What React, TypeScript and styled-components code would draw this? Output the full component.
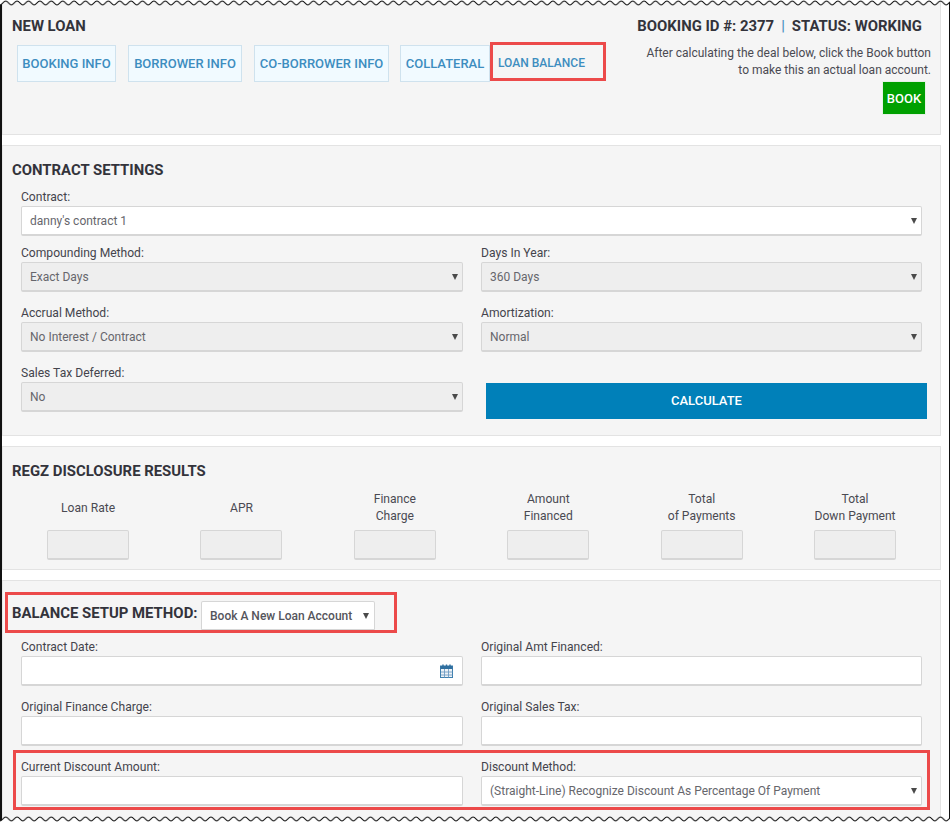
import React from "react";
import styled, { createGlobalStyle } from "styled-components";

const Global = createGlobalStyle`
  html, body { margin: 0; padding: 0; background: #fff; }
  * { box-sizing: border-box; }
  body { font-family: Roboto, "Liberation Sans", sans-serif; color: #3c3c46; }
`;

const Page = styled.div`
  position: relative;
  width: 950px;
  height: 823px;
  overflow: hidden;
  background: #fff;
`;

const Sheet = styled.main`
  width: 950px;
  height: 823px;
  padding-right: 8px;
  border-left: 2px solid #111;
  border-right: 1px solid #111;
  display: flex;
  flex-direction: column;
  gap: 10px;
`;

const Panel = styled.section<{ $height: number }>`
  height: ${(p) => p.$height}px;
  flex: none;
  background: #f5f5f5;
  border: 1px solid #e3e3e3;
  border-left-color: #e8e8e8;
  padding: 0 0 0 9px;
`;

const Title = styled.h2`
  margin: 0;
  font-size: 14.9px;
  line-height: 20px;
  font-weight: 700;
  color: #33333b;
  white-space: nowrap;
`;

const HeaderPanel = styled(Panel)`
  display: flex;
  justify-content: space-between;
  padding-top: 15px;
  padding-right: 9px;
`;

const HeaderLeft = styled.div`
  display: flex;
  flex-direction: column;
`;

const Tabs = styled.nav`
  display: flex;
  margin: 9px 0 0 5px;
`;

const Tab = styled.a<{ $width: number; $gap: number }>`
  width: ${(p) => p.$width}px;
  margin-right: ${(p) => p.$gap}px;
  height: 37px;
  display: flex;
  align-items: center;
  justify-content: center;
  background: #f1faff;
  border: 1px solid #cfe2ee;
  color: #3d8dbf;
  font-size: 13px;
  font-weight: 500;
  white-space: nowrap;
`;

const PlainTab = styled.a`
  position: relative;
  width: 116px;
  height: 37px;
  padding: 0 0 2px 8px;
  display: flex;
  align-items: center;
  color: #3d8dbf;
  font-size: 12px;
  font-weight: 500;
  white-space: nowrap;
`;

const Highlight = styled.span<{ $t: number; $r: number; $b: number; $l: number }>`
  position: absolute;
  top: ${(p) => p.$t}px;
  right: ${(p) => p.$r}px;
  bottom: ${(p) => p.$b}px;
  left: ${(p) => p.$l}px;
  border: 3px solid #ec4a4a;
  pointer-events: none;
`;

const HeaderRight = styled.div`
  display: flex;
  flex-direction: column;
  align-items: flex-end;
`;

const Status = styled(Title)`
  margin-right: 9px;
  display: flex;
  gap: 7px;
`;

const Pipe = styled.span`
  color: #4a90c0;
  font-weight: 500;
`;

const Note = styled.p`
  margin: 9px 0 0;
  font-size: 12px;
  line-height: 17px;
  text-align: right;
  color: #4a4a52;
`;

const BookButton = styled.button`
  width: 44px;
  height: 34px;
  margin: 2px 5px 0 0;
  border: 1px solid #e6f2e6;
  padding: 0;
  background: #00a000;
  color: #fff;
  font: 500 13px Roboto, sans-serif;
`;

const SettingsPanel = styled(Panel)`
  padding-top: 14px;
`;

const Fields = styled.div`
  margin: 0 19px 0 9px;
  display: grid;
  grid-template-columns: 442px 441px;
  column-gap: 18px;
  row-gap: 14px;
`;

const ContractFields = styled(Fields)`
  margin-top: 10px;
  row-gap: 14px;
`;

const Field = styled.div<{ $wide?: boolean }>`
  grid-column: ${(p) => (p.$wide ? "1 / -1" : "auto")};
  margin-bottom: ${(p) => (p.$wide ? "-4px" : "0")};
  display: flex;
  flex-direction: column;
  min-width: 0;
`;

const Label = styled.label`
  display: block;
  height: 16px;
  font-size: 12.1px;
  line-height: 14px;
  color: #44444c;
  white-space: nowrap;
`;

const SelectWrap = styled.div`
  position: relative;
  height: 30px;
  &::after {
    content: "";
    position: absolute;
    right: 5px;
    top: 12px;
    border-left: 3.5px solid transparent;
    border-right: 3.5px solid transparent;
    border-top: 6px solid #4a4a4a;
    pointer-events: none;
  }
`;

const Select = styled.select<{ $off?: boolean }>`
  appearance: none;
  width: 100%;
  height: 100%;
  padding: 0 0 0 8px;
  border: 1px solid #d6d6d6;
  border-width: 1px 1px 2px 1px;
  border-radius: 2px;
  background: ${(p) => (p.$off ? "#eeeeee" : "#fff")};
  color: #66666c;
  font: 400 12px Roboto, sans-serif;
  opacity: 1;
`;

const Input = styled.input`
  display: block;
  width: 100%;
  height: 30px;
  padding: 0 7px;
  border: 1px solid #d6d6d6;
  border-width: 1px 1px 2px 1px;
  border-radius: 2px;
  background: #fff;
  font: 400 12px Roboto, sans-serif;
`;

const DateWrap = styled.div`
  position: relative;
  height: 30px;
`;

const DateIcon = styled.svg`
  position: absolute;
  right: 10px;
  top: 8px;
  width: 13px;
  height: 14px;
`;

const CalcButton = styled.button`
  align-self: end;
  width: 441px;
  height: 36px;
  margin: 0 0 -7px 5px;
  border: 0;
  padding: 0 0 2px;
  background: #0080b9;
  color: #fff;
  font: 500 13px Roboto, sans-serif;
`;

const RegzPanel = styled(Panel)`
  padding-top: 14px;
`;

const Metrics = styled.div`
  margin: 10px 0 0 -0.6px;
  width: 920px;
  display: grid;
  grid-template-columns: repeat(6, 153.4px);
`;

const Metric = styled.div`
  display: flex;
  flex-direction: column;
  align-items: center;
`;

const MetricLabel = styled.div`
  height: 34px;
  display: flex;
  align-items: center;
  text-align: center;
  font-size: 12.1px;
  line-height: 17px;
  color: #4a4a52;
`;

const MetricBox = styled.input`
  width: 82px;
  height: 30px;
  margin-top: 5px;
  border: 1px solid #d6d6d6;
  border-width: 1px 1px 2px 1px;
  border-radius: 2px;
  background: #eeeeee;
`;

const BalancePanel = styled(Panel)`
  padding-top: 20px;
`;

const MethodRow = styled.div`
  position: relative;
  width: 363px;
  display: flex;
  align-items: center;
  justify-content: space-between;
  height: 30px;
  & > h2 {
    margin-top: -6px;
  }
`;

const MethodSelect = styled(SelectWrap)`
  width: 174px;
  flex: none;
  &::after {
    right: 6px;
  }
  & select {
    font-weight: 500;
    color: #55555c;
  }
`;

const BalanceFields = styled(Fields)`
  margin-top: 9px;
`;

const DiscountField = styled(Field)`
  position: relative;
`;

const TornEdge = styled.svg<{ $bottom?: boolean }>`
  position: absolute;
  left: 0;
  width: 950px;
  height: 8px;
  ${(p) => (p.$bottom ? "bottom: 0;" : "top: 0;")}
`;

function Edge({ bottom }: { bottom?: boolean }) {
  const id = bottom ? "waveB" : "waveT";
  const y = bottom ? 6 : 5;
  const h = y - 4;
  const line = `M0 ${y} C2 ${y} 3.4 ${h} 5.7 ${h} C8 ${h} 9.4 ${y} 11.4 ${y}`;
  const cap = bottom ? "V8 H0 Z" : "V0 H0 Z";
  return (
    <TornEdge $bottom={bottom} viewBox="0 0 950 8" aria-hidden="true">
      <defs>
        <pattern id={id} width="11.4" height="8" patternUnits="userSpaceOnUse">
          <path d={`${line} ${cap}`} fill="#fff" />
          <path d={line} fill="none" stroke="#111" strokeWidth="1" />
        </pattern>
      </defs>
      <rect width="950" height="8" fill={`url(#${id})`} />
    </TornEdge>
  );
}

function Sel({ value, off }: { value: string; off?: boolean }) {
  return (
    <SelectWrap>
      <Select $off={off} disabled={off} defaultValue={value}>
        <option>{value}</option>
      </Select>
    </SelectWrap>
  );
}

const metrics: React.ReactNode[] = [
  "Loan Rate",
  "APR",
  <>Finance<br />Charge</>,
  <>Amount<br />Financed</>,
  <>Total<br />of Payments</>,
  <>Total<br />Down Payment</>,
];

export default function App() {
  return (
    <Page>
      <Global />
      <Sheet>
        <HeaderPanel $height={135}>
          <HeaderLeft>
            <Title>NEW LOAN</Title>
            <Tabs>
              <Tab $width={99} $gap={12}>BOOKING INFO</Tab>
              <Tab $width={114} $gap={12}>BORROWER INFO</Tab>
              <Tab $width={135} $gap={11}>CO-BORROWER INFO</Tab>
              <Tab $width={90} $gap={0}>COLLATERAL</Tab>
              <PlainTab>
                LOAN BALANCE
                <Highlight $t={-3} $r={0} $b={1} $l={0} />
              </PlainTab>
            </Tabs>
          </HeaderLeft>
          <HeaderRight>
            <Status>
              <span>BOOKING ID #: 2377</span>
              <Pipe>|</Pipe>
              <span>STATUS: WORKING</span>
            </Status>
            <Note>
              After calculating the deal below, click the Book button
              <br />
              to make this an actual loan account.
            </Note>
            <BookButton>BOOK</BookButton>
          </HeaderRight>
        </HeaderPanel>

        <SettingsPanel $height={291}>
          <Title>CONTRACT SETTINGS</Title>
          <ContractFields>
            <Field $wide>
              <Label>Contract:</Label>
              <Sel value="danny's contract 1" />
            </Field>
            <Field>
              <Label>Compounding Method:</Label>
              <Sel off value="Exact Days" />
            </Field>
            <Field>
              <Label>Days In Year:</Label>
              <Sel off value="360 Days" />
            </Field>
            <Field>
              <Label>Accrual Method:</Label>
              <Sel off value="No Interest / Contract" />
            </Field>
            <Field>
              <Label>Amortization:</Label>
              <Sel off value="Normal" />
            </Field>
            <Field>
              <Label>Sales Tax Deferred:</Label>
              <Sel off value="No" />
            </Field>
            <CalcButton>CALCULATE</CalcButton>
          </ContractFields>
        </SettingsPanel>

        <RegzPanel $height={124}>
          <Title>REGZ DISCLOSURE RESULTS</Title>
          <Metrics>
            {metrics.map((m, i) => (
              <Metric key={i}>
                <MetricLabel>{m}</MetricLabel>
                <MetricBox disabled />
              </Metric>
            ))}
          </Metrics>
        </RegzPanel>

        <BalancePanel $height={245}>
          <MethodRow>
            <Title>BALANCE SETUP METHOD:</Title>
            <MethodSelect>
              <Select defaultValue="Book A New Loan Account">
                <option>Book A New Loan Account</option>
              </Select>
            </MethodSelect>
            <Highlight $t={-9} $r={-22} $b={-2} $l={-7} />
          </MethodRow>
          <BalanceFields>
            <Field>
              <Label>Contract Date:</Label>
              <DateWrap>
                <Input />
                <DateIcon viewBox="0 0 13 14" aria-hidden="true">
                  <rect x="0.5" y="2" width="12" height="11.5" fill="#eef2f6" stroke="#3f7fae" />
                  <rect x="0.5" y="2" width="12" height="3" fill="#2f6f9f" />
                  <path d="M3 0.5V3M6.5 0.5V3M10 0.5V3" stroke="#2f6f9f" strokeWidth="1.4" />
                  <path d="M4.5 5V13.5M8.5 5V13.5M1 8H12.5M1 11H12.5" stroke="#6f9cc4" strokeWidth="0.9" />
                </DateIcon>
              </DateWrap>
            </Field>
            <Field>
              <Label>Original Amt Financed:</Label>
              <Input />
            </Field>
            <Field>
              <Label>Original Finance Charge:</Label>
              <Input />
            </Field>
            <Field>
              <Label>Original Sales Tax:</Label>
              <Input />
            </Field>
            <DiscountField>
              <Label>Current Discount Amount:</Label>
              <Input />
              <Highlight $t={-10} $r={-467} $b={-4} $l={-8} />
            </DiscountField>
            <Field>
              <Label>Discount Method:</Label>
              <Sel value="(Straight-Line) Recognize Discount As Percentage Of Payment" />
            </Field>
          </BalanceFields>
        </BalancePanel>
      </Sheet>
      <Edge />
      <Edge bottom />
    </Page>
  );
}
